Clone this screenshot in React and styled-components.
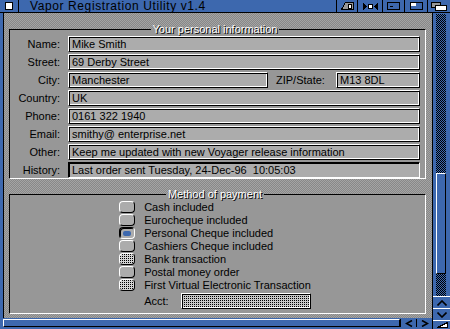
import React from 'react';
import styled, { createGlobalStyle, css } from 'styled-components';

const BLUE = '#3d68ae';
const GREY = '#979797';
const FIELD = '#acacac';
const dither = `repeating-conic-gradient(#a4a4a4 0% 25%, #888888 0% 50%) 0 0 / 2px 2px`;
const blueDither = `repeating-conic-gradient(${BLUE} 0% 25%, #000000 0% 50%) 0 0 / 2px 2px`;
const ghost = (bg) => `conic-gradient(at 1px 1px, ${bg} 0 75%, #000 0) 0 0 / 2px 2px`;

const Global = createGlobalStyle`
  html, body { margin: 0; padding: 0; background: #000; }
  body { font-family: "Liberation Sans", Arial, sans-serif; font-size: 11px; color: #000; }
  #root { width: 450px; height: 329px; }
`;

const Window = styled.div`
  width: 450px;
  height: 329px;
  display: flex;
  flex-direction: column;
  background: ${BLUE};
  overflow: hidden;
`;

const TitleBar = styled.div`
  height: 12px;
  border-bottom: 1px solid #000;
  display: flex;
  align-items: stretch;
  background: ${BLUE};
  flex: none;
`;

const CloseGadget = styled.div`
  width: 18px;
  border-right: 1px solid #000;
  display: flex;
  align-items: center;
  justify-content: center;
  flex: none;
`;

const CloseBox = styled.span`
  width: 6px;
  height: 6px;
  background: #fff;
  border: 1px solid #000;
`;

const Title = styled.div`
  flex: 1;
  padding-left: 11px;
  font-size: 12px;
  letter-spacing: 0.6px;
  line-height: 12px;
  white-space: nowrap;
  overflow: hidden;
`;

const Gadget = styled.div`
  width: ${(p) => p.$w}px;
  box-sizing: border-box;
  border-left: 1px solid #000;
  display: flex;
  align-items: center;
  justify-content: center;
  flex: none;
  svg { display: block; }
`;

const Body = styled.div`
  flex: 1;
  display: flex;
  min-height: 0;
`;

const Main = styled.div`
  flex: 1;
  display: flex;
  flex-direction: column;
  min-width: 0;
`;

const Middle = styled.div`
  flex: 1;
  display: flex;
  min-height: 0;
`;

const LeftBorder = styled.div`
  width: 3px;
  border-right: 1px solid #000;
  background: ${BLUE};
  flex: none;
`;

const Content = styled.div`
  flex: 1;
  background: ${dither};
  display: flex;
  flex-direction: column;
`;

const Group = styled.fieldset`
  margin: ${(p) => (p.$second ? '9px' : '10px')} 6px 0 5px;
  padding: 1px 5px ${(p) => (p.$second ? '4px' : '0')} 0;
  border: 0;
  border-top: 1px solid #000;
  border-left: 1px solid #000;
  border-right: 1px solid #fff;
  border-bottom: 1px solid #fff;
  background: ${GREY};
  min-width: 0;
`;

const Legend = styled.legend`
  margin: 0 auto;
  padding: 0 2px;
  line-height: 12px;
  color: #fff;
  text-shadow: 1px 1px 0 #000;
`;

const FormGrid = styled.div`
  display: grid;
  grid-template-columns: 50px 1fr;
  column-gap: 8px;
  row-gap: 2px;
`;

const Label = styled.div`
  text-align: right;
  line-height: 16px;
  white-space: nowrap;
`;

const fieldFrame = css`
  box-sizing: border-box;
  height: 16px;
  border: 1px solid;
  border-color: #fff #000 #000 #fff;
  box-shadow: inset 1px 1px 0 #000, inset -1px -1px 0 #fff;
`;

const Field = styled.div`
  ${fieldFrame};
  background: ${FIELD};
  padding: 0 3px;
  line-height: 14px;
  white-space: nowrap;
  overflow: hidden;
  ${(p) => (p.$w ? `width: ${p.$w}px; flex: none;` : 'flex: 1;')}
`;

const Display = styled.div`
  box-sizing: border-box;
  height: 16px;
  border: 1px solid;
  border-color: #000 #fff #fff #000;
  box-shadow: inset 1px 1px 0 #000;
  background: ${FIELD};
  padding: 0 3px;
  line-height: 14px;
  white-space: nowrap;
`;

const Inline = styled.div`
  display: flex;
  align-items: center;
`;

const InlineLabel = styled.span`
  width: 55px;
  flex: none;
  margin: 0 5px 0 8px;
  line-height: 16px;
  white-space: nowrap;
`;

const Options = styled.div`
  display: grid;
  grid-template-columns: 16px auto;
  column-gap: 9px;
  row-gap: 1px;
  justify-content: center;
  align-items: center;
`;

const Radio = styled.div`
  box-sizing: border-box;
  width: 16px;
  height: 12px;
  border-radius: 4px;
  border: 1px solid;
  display: flex;
  align-items: center;
  justify-content: center;
  ${(p) =>
    p.$state === 'on'
      ? css`
          border-color: #000 #fff #fff #000;
          box-shadow: inset 1px 1px 0 #000;
          background: ${FIELD};
        `
      : p.$state === 'off'
      ? css`
          border-color: #fff #000 #000 #fff;
          background: ${ghost('#d4d4d4')};
        `
      : css`
          border-color: #fff #000 #000 #fff;
          background: ${FIELD};
        `}
`;

const Dot = styled.span`
  width: 8px;
  height: 5px;
  border-radius: 2px;
  background: ${BLUE};
`;

const OptionLabel = styled.div`
  line-height: 12px;
  white-space: nowrap;
`;

const AcctRow = styled.div`
  grid-column: 2;
  display: flex;
  align-items: center;
  margin-top: 1px;
`;

const AcctLabel = styled.span`
  width: 37px;
  flex: none;
  line-height: 16px;
`;

const GhostField = styled.div`
  ${fieldFrame};
  flex: 1;
  background: ${ghost('#c8c8c8')};
`;

const BottomBar = styled.div`
  height: 11px;
  box-sizing: border-box;
  padding: 1px 0 2px 0;
  display: flex;
  background: ${BLUE};
  flex: none;
`;

const HProp = styled.div`
  flex: 1;
  margin-left: 3px;
  display: flex;
`;

const HKnob = styled.div`
  flex: 1;
  border-top: 1px solid #fff;
  border-left: 1px solid #fff;
  border-bottom: 1px solid #000;
  border-right: 1px solid #000;
  background: ${BLUE};
`;

const HArrow = styled.div`
  width: 16px;
  box-sizing: border-box;
  border-left: 1px solid #000;
  display: flex;
  align-items: center;
  justify-content: center;
  svg { display: block; }
`;

const RightBar = styled.div`
  width: 18px;
  box-sizing: border-box;
  border-left: 1px solid #000;
  display: flex;
  flex-direction: column;
  background: ${BLUE};
  flex: none;
`;

const Track = styled.div`
  flex: 1;
  padding: 1px 4px 0 3px;
  display: flex;
  flex-direction: column;
`;

const TrackInner = styled.div`
  flex: 1;
  background: ${blueDither};
`;

const Knob = styled.div`
  box-sizing: border-box;
  border-top: 1px solid #fff;
  border-left: 1px solid #fff;
  border-right: 1px solid #000;
  border-bottom: 1px solid #000;
  background: ${BLUE};
`;

const VArrow = styled.div`
  height: 12px;
  box-sizing: border-box;
  border-top: 1px solid #fff;
  display: flex;
  align-items: center;
  justify-content: center;
  flex: none;
  svg { display: block; }
`;

const SizeGadget = styled.div`
  height: 9px;
  box-sizing: border-box;
  border-top: 1px solid #fff;
  display: flex;
  align-items: flex-end;
  justify-content: flex-end;
  padding: 0 2px 1px 0;
  flex: none;
  svg { display: block; }
`;

const options = [
  { label: 'Cash included', state: 'normal' },
  { label: 'Eurocheque included', state: 'normal' },
  { label: 'Personal Cheque included', state: 'on' },
  { label: 'Cashiers Cheque included', state: 'normal' },
  { label: 'Bank transaction', state: 'off' },
  { label: 'Postal money order', state: 'normal' },
  { label: 'First Virtual Electronic Transaction', state: 'off' },
];

const fields = [
  ['Name:', 'Mike Smith'],
  ['Street:', '69 Derby Street'],
  ['City:', null],
  ['Country:', 'UK'],
  ['Phone:', '0161 322 1940'],
  ['Email:', 'smithy@ enterprise.net'],
  ['Other:', 'Keep me updated with new Voyager release information'],
];

export default function App() {
  return (
    <>
      <Global />
      <Window>
        <TitleBar>
          <CloseGadget>
            <CloseBox />
          </CloseGadget>
          <Title>Vapor Registration Utility v1.4</Title>
          <Gadget $w={21}>
            <svg width="13" height="8" viewBox="0 0 13 8" shapeRendering="crispEdges">
              <polygon points="0.5,7.5 4.5,0.5 12.5,0.5 12.5,7.5" fill="#979797" stroke="#000" />
              <rect x="7.5" y="2.5" width="3" height="4" fill="#fff" stroke="#000" />
            </svg>
          </Gadget>
          <Gadget $w={25}>
            <svg width="15" height="7" viewBox="0 0 15 7" shapeRendering="crispEdges">
              <polygon points="0,0 4,3.5 0,7" fill="#000" />
              <rect x="5.5" y="1.5" width="4" height="4" fill="#fff" stroke="#000" />
              <polygon points="15,0 11,3.5 15,7" fill="#000" />
            </svg>
          </Gadget>
          <Gadget $w={22}>
            <svg width="13" height="8" viewBox="0 0 13 8" shapeRendering="crispEdges">
              <rect x="0.5" y="0.5" width="12" height="7" fill={BLUE} stroke="#000" />
              <rect x="3" y="4" width="3" height="1" fill="#000" />
            </svg>
          </Gadget>
          <Gadget $w={23}>
            <svg width="13" height="8" viewBox="0 0 13 8" shapeRendering="crispEdges">
              <rect x="0.5" y="0.5" width="12" height="7" fill={BLUE} stroke="#000" />
              <rect x="1" y="1" width="5" height="3" fill="#fff" />
            </svg>
          </Gadget>
          <Gadget $w={23}>
            <svg width="16" height="9" viewBox="0 0 16 9" shapeRendering="crispEdges">
              <rect x="0.5" y="0.5" width="9" height="5" fill="#979797" stroke="#000" />
              <rect x="4.5" y="3.5" width="11" height="5" fill="#fff" stroke="#000" />
            </svg>
          </Gadget>
        </TitleBar>
        <Body>
          <Main>
            <Middle>
              <LeftBorder />
              <Content>
                <Group>
                  <Legend>Your personal information</Legend>
                  <FormGrid>
                    {fields.map(([label, value]) => (
                      <React.Fragment key={label}>
                        <Label>{label}</Label>
                        {value === null ? (
                          <Inline>
                            <Field>Manchester</Field>
                            <InlineLabel>ZIP/State:</InlineLabel>
                            <Field $w={84}>M13 8DL</Field>
                          </Inline>
                        ) : (
                          <Field>{value}</Field>
                        )}
                      </React.Fragment>
                    ))}
                    <Label>History:</Label>
                    <Display>Last order sent Tuesday, 24-Dec-96{'\u00a0 '}10:05:03</Display>
                  </FormGrid>
                </Group>
                <Group $second>
                  <Legend>Method of payment</Legend>
                  <Options>
                    {options.map((o) => (
                      <React.Fragment key={o.label}>
                        <Radio $state={o.state}>{o.state === 'on' && <Dot />}</Radio>
                        <OptionLabel>{o.label}</OptionLabel>
                      </React.Fragment>
                    ))}
                    <AcctRow>
                      <AcctLabel>Acct:</AcctLabel>
                      <GhostField />
                    </AcctRow>
                  </Options>
                </Group>
              </Content>
            </Middle>
            <BottomBar>
              <HProp>
                <HKnob />
              </HProp>
              <HArrow>
                <svg width="8" height="7" viewBox="0 0 8 7">
                  <polyline points="7,0.5 1.5,3.5 7,6.5" fill="none" stroke="#000" strokeWidth="1.6" />
                </svg>
              </HArrow>
              <HArrow>
                <svg width="8" height="7" viewBox="0 0 8 7">
                  <polyline points="1,0.5 6.5,3.5 1,6.5" fill="none" stroke="#000" strokeWidth="1.6" />
                </svg>
              </HArrow>
            </BottomBar>
          </Main>
          <RightBar>
            <Track>
              <TrackInner>
                <Knob style={{ marginTop: 159, height: 101 }} />
              </TrackInner>
            </Track>
            <VArrow>
              <svg width="10" height="6" viewBox="0 0 10 6">
                <polyline points="0.5,5.5 5,1 9.5,5.5" fill="none" stroke="#000" strokeWidth="1.6" />
              </svg>
            </VArrow>
            <VArrow>
              <svg width="10" height="6" viewBox="0 0 10 6">
                <polyline points="0.5,0.5 5,5 9.5,0.5" fill="none" stroke="#000" strokeWidth="1.6" />
              </svg>
            </VArrow>
            <SizeGadget>
              <svg width="11" height="6" viewBox="0 0 11 6" shapeRendering="crispEdges">
                <polygon points="0.5,5.5 10.5,5.5 10.5,0.5" fill="#fff" stroke="#000" />
              </svg>
            </SizeGadget>
          </RightBar>
        </Body>
      </Window>
    </>
  );
}
